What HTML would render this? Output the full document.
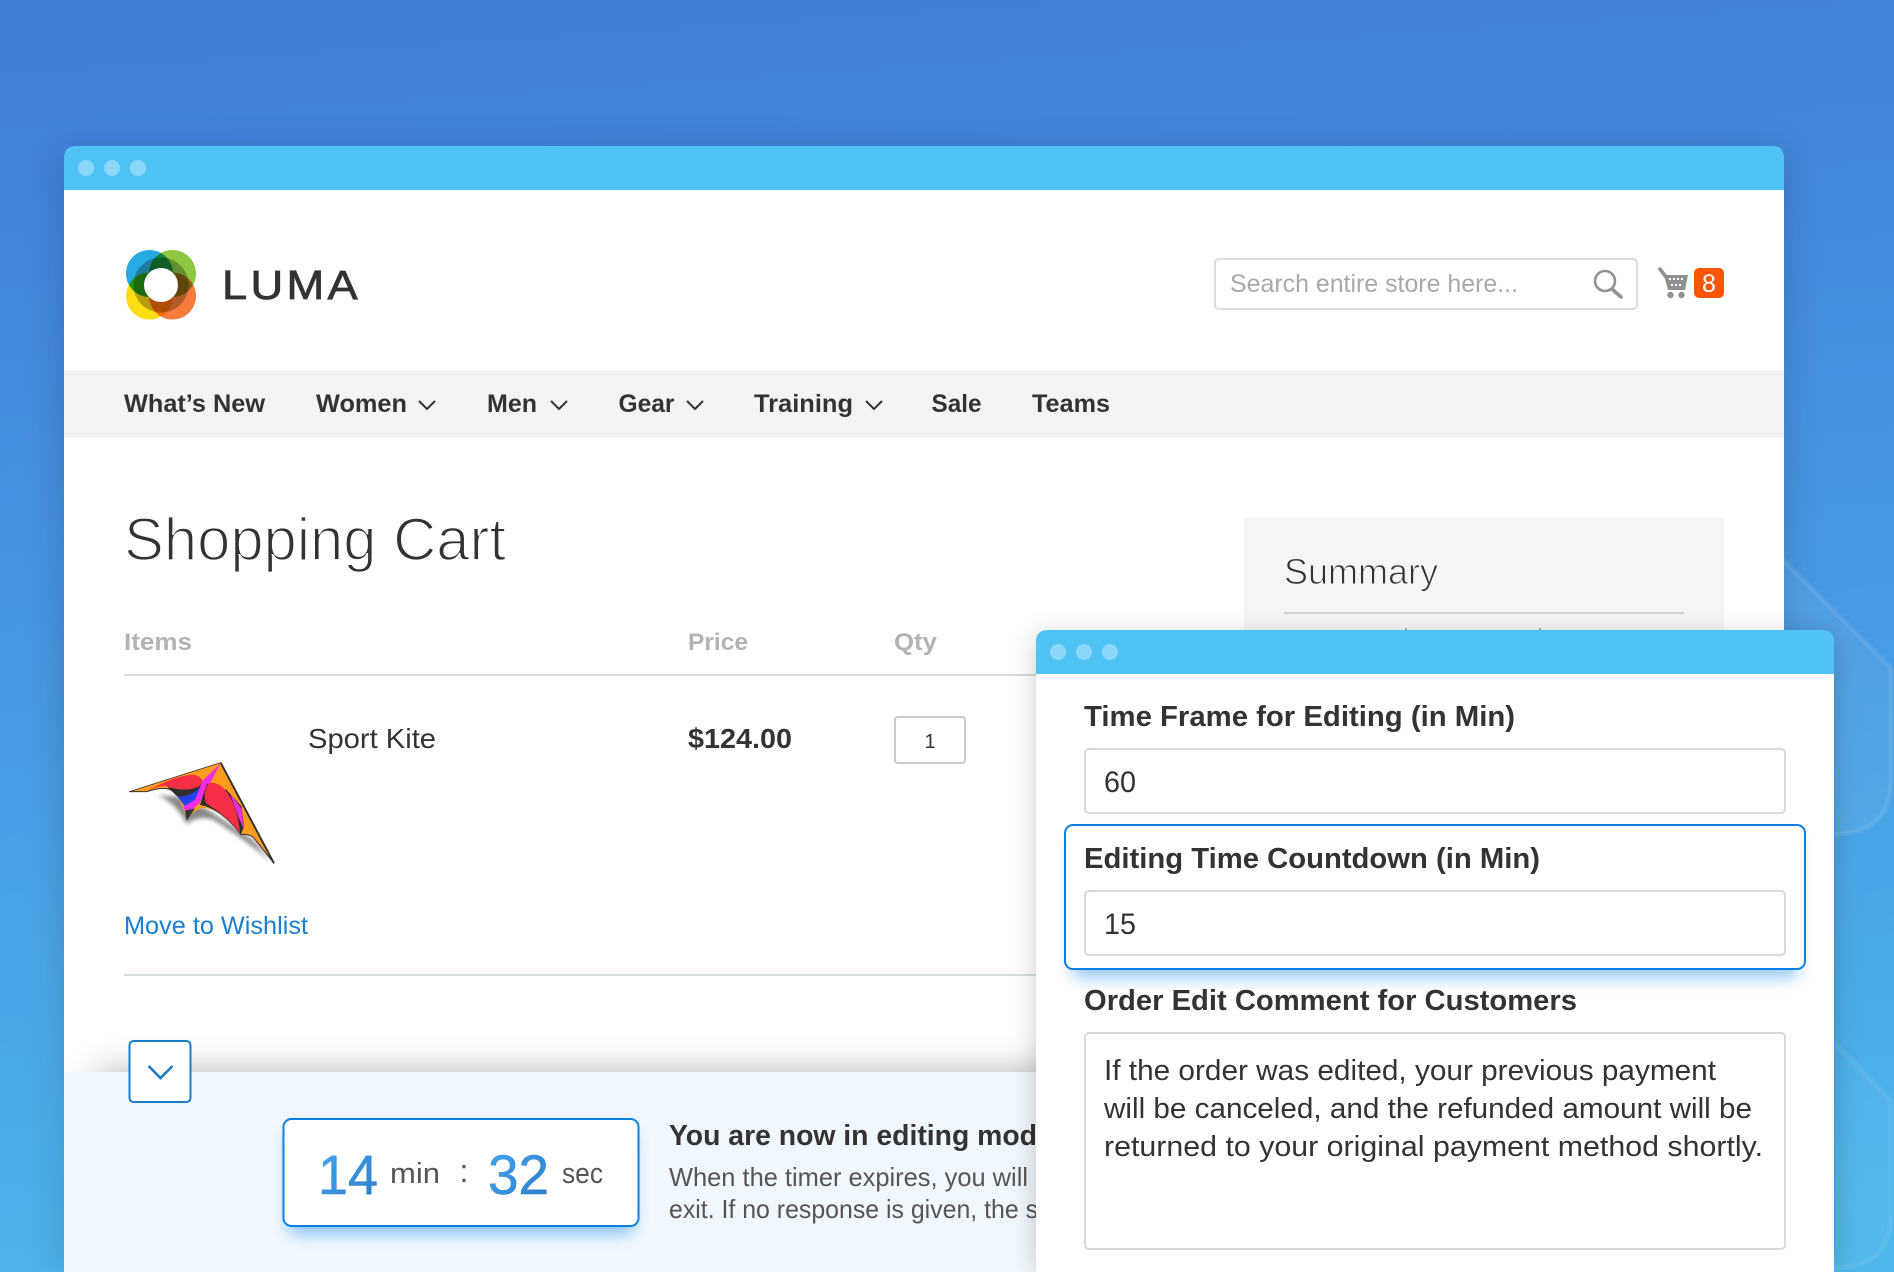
<!DOCTYPE html>
<html lang="en"><head><meta charset="utf-8"><title>Luma Shopping Cart</title>
<style>
html,body{margin:0;padding:0;background:#4280da;width:1894px;height:1272px;overflow:hidden}
svg{display:block}
text{font-family:"Liberation Sans",Arial,sans-serif;fill:#333}
.b{font-weight:700}
</style></head><body>
<svg xmlns="http://www.w3.org/2000/svg" width="1894" height="1272" viewBox="0 0 1894 1272">
<defs>
<linearGradient id="bg" x1="0.45" y1="0" x2="0.55" y2="1"><stop offset="0" stop-color="#4180da"/><stop offset=".5" stop-color="#4798e2"/><stop offset="1" stop-color="#4eb7ec"/></linearGradient>
<linearGradient id="dg" x1="0" y1="0" x2="1" y2="1"><stop offset="0" stop-color="#46a8f0"/><stop offset="1" stop-color="#2a7bc8"/></linearGradient>
<filter id="s20" filterUnits="userSpaceOnUse" x="-100" y="0" width="2200" height="1500"><feGaussianBlur stdDeviation="20"/></filter>
<filter id="s18" filterUnits="userSpaceOnUse" x="-100" y="0" width="2200" height="1500"><feGaussianBlur stdDeviation="18"/></filter>
<filter id="s14" filterUnits="userSpaceOnUse" x="-100" y="0" width="2200" height="1500"><feGaussianBlur stdDeviation="14"/></filter>
<filter id="s8" filterUnits="userSpaceOnUse" x="-100" y="0" width="2200" height="1500"><feGaussianBlur stdDeviation="8"/></filter>
<filter id="s5" filterUnits="userSpaceOnUse" x="0" y="0" width="600" height="500"><feGaussianBlur stdDeviation="6"/></filter>
<clipPath id="mw"><rect x="64" y="146" width="1720" height="1126"/></clipPath>
</defs>
<rect width="1894" height="1272" fill="url(#bg)"/>

<!-- decorative shapes -->
<path d="M1784 561 L1891 668 V779 Q1891 834 1834 834 H1700 V561Z" fill="#fff" fill-opacity=".06" stroke="#fff" stroke-opacity=".09" stroke-width="5"/>
<path d="M1834 1043 L1891 1100 V1215 Q1891 1268 1834 1268 H1750 V1043Z" fill="#fff" fill-opacity=".03" stroke="#fff" stroke-opacity=".07" stroke-width="5"/>

<!-- main window -->
<rect x="64" y="152" width="1720" height="1120" fill="#000" opacity=".16" filter="url(#s20)"/>
<path d="M64 190 V158 Q64 146 76 146 H1772 Q1784 146 1784 158 V190Z" fill="#50c3f4"/>
<rect x="64" y="190" width="1720" height="1082" fill="#fff"/>
<g fill="#8ad7f9"><circle cx="86" cy="168" r="8"/><circle cx="112" cy="168" r="8"/><circle cx="138" cy="168" r="8"/></g>

<!-- logo -->
<g style="isolation:isolate">
<circle cx="149.5" cy="273.5" r="23.5" fill="#27a9e1" style="mix-blend-mode:multiply"/>
<circle cx="172.5" cy="273.5" r="23.5" fill="#8dc63f" style="mix-blend-mode:multiply"/>
<circle cx="149.5" cy="296" r="23.5" fill="#ffdd15" style="mix-blend-mode:multiply"/>
<circle cx="172.5" cy="296" r="23.5" fill="#f57c3a" style="mix-blend-mode:multiply"/>
<circle cx="161" cy="285" r="27.500" fill="#b8b8b8" style="mix-blend-mode:multiply"/>
<circle cx="161" cy="285" r="17" fill="#fff"/>
</g>
<text x="222" y="299" font-size="41" stroke="#333" stroke-width=".8" letter-spacing="3" textLength="139" lengthAdjust="spacingAndGlyphs">LUMA</text>

<!-- search -->
<rect x="1215" y="259" width="422" height="50" rx="4" fill="#fff" stroke="#ddd" stroke-width="2"/>
<text x="1230" y="292" font-size="25" style="fill:#a9a9a9" textLength="288" lengthAdjust="spacingAndGlyphs">Search entire store here...</text>
<circle cx="1605" cy="281" r="10" fill="none" stroke="#8f9294" stroke-width="2.6"/>
<path d="M1612 289 L1621 297" stroke="#8f9294" stroke-width="3.6" stroke-linecap="round"/>

<!-- cart -->
<path d="M1660 269 L1666 277" stroke="#8f9294" stroke-width="3.6" stroke-linecap="round"/>
<path d="M1664 275 H1688 L1685 290 H1668Z" fill="#8f9294"/>
<g fill="#fff"><rect x="1669" y="278" width="2" height="2"/><rect x="1673" y="278" width="2" height="2"/><rect x="1677" y="278" width="2" height="2"/><rect x="1681" y="278" width="2" height="2"/><rect x="1671" y="284" width="2" height="2"/><rect x="1675" y="284" width="2" height="2"/><rect x="1679" y="284" width="2" height="2"/></g>
<circle cx="1670.500" cy="295" r="3.2" fill="#8f9294"/><circle cx="1681.500" cy="295" r="3.2" fill="#8f9294"/>
<rect x="1694" y="268" width="30" height="30" rx="5" fill="#ff5501"/>
<text x="1709" y="292" font-size="25" text-anchor="middle" style="fill:#fff">8</text>

<!-- nav -->
<rect x="64" y="370" width="1720" height="68" fill="#f4f4f4"/>
<text class="b" x="124" y="412" font-size="25" textLength="141" lengthAdjust="spacingAndGlyphs">What’s New</text>
<text class="b" x="316" y="412" font-size="25" textLength="91" lengthAdjust="spacingAndGlyphs">Women</text>
<text class="b" x="487" y="412" font-size="25" textLength="50" lengthAdjust="spacingAndGlyphs">Men</text>
<text class="b" x="618.500" y="412" font-size="25" textLength="56" lengthAdjust="spacingAndGlyphs">Gear</text>
<text class="b" x="754" y="412" font-size="25" textLength="99" lengthAdjust="spacingAndGlyphs">Training</text>
<text class="b" x="931.500" y="412" font-size="25" textLength="50" lengthAdjust="spacingAndGlyphs">Sale</text>
<text class="b" x="1032" y="412" font-size="25" textLength="78" lengthAdjust="spacingAndGlyphs">Teams</text>
<g fill="none" stroke="#333" stroke-width="2">
<path d="M419 401 L427 409 L435 401"/><path d="M551 401 L559 409 L567 401"/><path d="M687 401 L695 409 L703 401"/><path d="M866 401 L874 409 L882 401"/>
</g>

<!-- cart heading -->
<text x="124" y="560" font-size="60" stroke="#fff" stroke-width="1.7" textLength="382" lengthAdjust="spacingAndGlyphs">Shopping Cart</text>
<text class="b" x="124" y="650" font-size="24" style="fill:#b3b3b3" textLength="68" lengthAdjust="spacingAndGlyphs">Items</text>
<text class="b" x="688" y="650" font-size="24" style="fill:#b3b3b3" textLength="60" lengthAdjust="spacingAndGlyphs">Price</text>
<text class="b" x="894" y="650" font-size="24" style="fill:#b3b3b3" textLength="43" lengthAdjust="spacingAndGlyphs">Qty</text>
<rect x="124" y="674" width="920" height="2" fill="#d8dcdc"/>

<text x="308" y="748" font-size="28" textLength="128" lengthAdjust="spacingAndGlyphs">Sport Kite</text>
<text class="b" x="688" y="748" font-size="28" textLength="104" lengthAdjust="spacingAndGlyphs">$124.00</text>
<rect x="895" y="717" width="70" height="46" rx="3" fill="#fff" stroke="#ccc" stroke-width="2"/>
<text x="930" y="748" font-size="20" text-anchor="middle">1</text>

<!-- kite -->
<g transform="translate(120 750) scale(.3333)">
<path d="M85 135 C130 130 175 170 200 222 C230 198 270 198 300 222 C340 248 400 288 455 338 L400 270 L265 180 L170 140Z" fill="#555" opacity=".7" filter="url(#s5)"/>
<path d="M28 125 L302 38 L462 340 L400 262 Q385 250 362 255 C335 215 300 185 265 175 C240 170 215 185 200 212 C195 185 185 160 170 135 C150 105 110 115 80 125Z" fill="#ff9c1f"/>
<path d="M28 125 L302 38" fill="none" stroke="#333" stroke-width="2.5"/>
<path d="M302 38 L462 340" fill="none" stroke="#333" stroke-width="6"/>
<path d="M28 125 L80 125 C110 115 150 105 170 135 M362 255 Q385 250 400 262 L462 340" fill="none" stroke="#333" stroke-width="3"/>
<path d="M140 108 C170 120 210 125 245 100 L232 145 L172 140Z" fill="#2e2e2e"/>
<path d="M85 122 C130 95 190 72 225 75 C250 82 255 100 235 110 C205 125 170 118 140 108 C115 108 100 115 85 122Z" fill="#f42f46"/>
<path d="M172 140 C205 140 225 130 250 100 L225 165 L195 170 C188 160 180 150 172 140Z" fill="#2340f0"/>
<path d="M302 40 L248 92 L225 150 L190 170 L200 192 C215 180 225 170 238 160Z" fill="#f02ee8"/>
<path d="M195 182 L200 212 L225 175Z" fill="#333"/>
<path d="M262 100 C250 130 245 150 240 165 C280 170 330 210 362 255 L372 230 L365 170 L320 120Z" fill="#2e2e2e"/>
<path d="M268 100 C295 92 320 120 335 150 C350 180 358 220 360 250 C335 215 300 185 258 160 C250 135 255 110 268 100Z" fill="#f42f46"/>
<path d="M330 130 L365 175 L372 240 L355 200Z" fill="#e42ee0"/>
</g>

<text x="124" y="934" font-size="25" style="fill:#1a7fd0" textLength="184" lengthAdjust="spacingAndGlyphs">Move to Wishlist</text>
<rect x="124" y="974" width="920" height="2" fill="#d8dcdc"/>

<!-- summary -->
<rect x="1244" y="518" width="480" height="130" fill="#f5f5f5"/>
<text x="1284" y="584" font-size="36" stroke="#f5f5f5" stroke-width="1" textLength="154" lengthAdjust="spacingAndGlyphs">Summary</text>
<rect x="1284" y="612" width="400" height="2" fill="#d4d4d4"/>
<rect x="1405" y="628" width="2" height="2" fill="#aaa"/><rect x="1539" y="628" width="2" height="2" fill="#aaa"/>

<!-- bottom bar -->
<g clip-path="url(#mw)">
<rect x="96" y="1072" width="1000" height="40" fill="#000" opacity=".3" filter="url(#s18)"/>
<rect x="64" y="1072" width="1000" height="200" fill="#f0f7fd"/>
</g>
<rect x="129.500" y="1041" width="61" height="61" rx="4" fill="#fff" stroke="#1a7bc9" stroke-width="2"/>
<path d="M148.500 1066 L160.500 1078 L172.500 1066" fill="none" stroke="#1a7bc9" stroke-width="2.6"/>

<rect x="288" y="1130" width="346" height="104" rx="8" fill="#0c80e0" opacity=".45" filter="url(#s8)"/>
<rect x="283.500" y="1119" width="355" height="107" rx="8" fill="#fff" stroke="#0c80e0" stroke-width="2"/>
<text x="318" y="1194" font-size="56" stroke="url(#dg)" stroke-width=".6" style="fill:url(#dg)" textLength="60" lengthAdjust="spacingAndGlyphs">14</text>
<text x="390" y="1183" font-size="29" style="fill:#555" textLength="50" lengthAdjust="spacingAndGlyphs">min</text>
<text x="464" y="1182" font-size="32" text-anchor="middle" style="fill:#555">:</text>
<text x="488" y="1194" font-size="56" stroke="url(#dg)" stroke-width=".6" style="fill:url(#dg)" textLength="61" lengthAdjust="spacingAndGlyphs">32</text>
<text x="562" y="1183" font-size="29" style="fill:#555" textLength="41" lengthAdjust="spacingAndGlyphs">sec</text>

<text class="b" x="669" y="1145" font-size="29" textLength="368" lengthAdjust="spacingAndGlyphs">You are now in editing mod</text>
<text x="669" y="1186" font-size="26" style="fill:#555" textLength="359" lengthAdjust="spacingAndGlyphs">When the timer expires, you will</text>
<text x="669" y="1218" font-size="26" style="fill:#555" textLength="369" lengthAdjust="spacingAndGlyphs">exit. If no response is given, the s</text>

<!-- second window -->
<rect x="1036" y="636" width="798" height="636" fill="#000" opacity=".2" filter="url(#s14)"/>
<path d="M1036 674 V642 Q1036 630 1048 630 H1822 Q1834 630 1834 642 V674Z" fill="#50c3f4"/>
<rect x="1036" y="674" width="798" height="598" fill="#fff"/>
<g fill="#8ad7f9"><circle cx="1058" cy="652" r="8"/><circle cx="1084" cy="652" r="8"/><circle cx="1110" cy="652" r="8"/></g>

<text class="b" x="1084" y="726" font-size="29" textLength="431" lengthAdjust="spacingAndGlyphs">Time Frame for Editing (in Min)</text>
<rect x="1085" y="749" width="700" height="64" rx="4" fill="#fff" stroke="#d9d9d9" stroke-width="2"/>
<text x="1104" y="792" font-size="30" textLength="32" lengthAdjust="spacingAndGlyphs">60</text>

<rect x="1072" y="838" width="726" height="140" rx="8" fill="#0c80e0" opacity=".42" filter="url(#s8)"/>
<rect x="1065" y="825" width="740" height="144" rx="8" fill="#fff" stroke="#0c80e0" stroke-width="2"/>
<text class="b" x="1084" y="868" font-size="29" textLength="456" lengthAdjust="spacingAndGlyphs">Editing Time Countdown (in Min)</text>
<rect x="1085" y="891" width="700" height="64" rx="4" fill="#fff" stroke="#d9d9d9" stroke-width="2"/>
<text x="1104" y="934" font-size="30" textLength="32" lengthAdjust="spacingAndGlyphs">15</text>

<text class="b" x="1084" y="1010" font-size="29" textLength="493" lengthAdjust="spacingAndGlyphs">Order Edit Comment for Customers</text>
<rect x="1085" y="1033" width="700" height="216" rx="4" fill="#fff" stroke="#d9d9d9" stroke-width="2"/>
<text x="1104" y="1080" font-size="29" textLength="612" lengthAdjust="spacingAndGlyphs">If the order was edited, your previous payment</text>
<text x="1104" y="1118" font-size="29" textLength="648" lengthAdjust="spacingAndGlyphs">will be canceled, and the refunded amount will be</text>
<text x="1104" y="1156" font-size="29" textLength="659" lengthAdjust="spacingAndGlyphs">returned to your original payment method shortly.</text>
</svg>
</body></html>
